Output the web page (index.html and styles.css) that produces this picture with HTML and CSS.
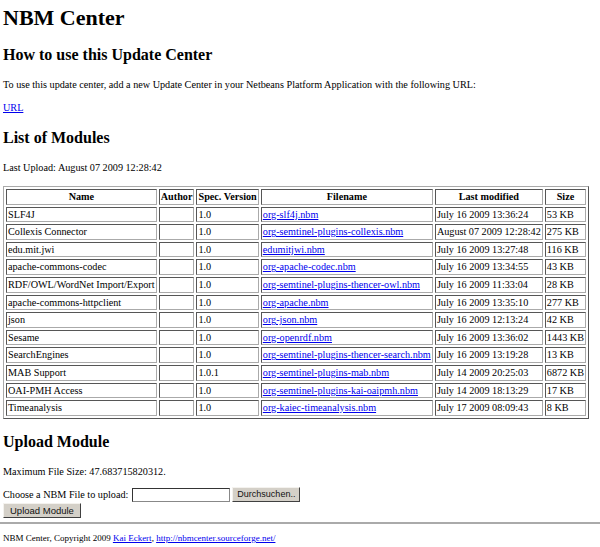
FILE: index.html
```html
<!DOCTYPE html>
<html>
<head>
<meta charset="utf-8">
<title>NBM Center</title>
<link rel="stylesheet" href="styles.css">
</head>
<body>
<h1 class="title">NBM Center</h1>
<h2 class="section">How to use this Update Center</h2>
<p class="text">To use this update center, add a new Update Center in your Netbeans Platform Application with the following URL:</p>
<p class="text"><a href="#">URL</a></p>
<h2 class="section">List of Modules</h2>
<p class="text">Last Upload: August 07 2009 12:28:42</p>
<table class="modules">
<tr><th class="c-name">Name</th><th class="c-author">Author</th><th class="c-spec">Spec. Version</th><th class="c-file">Filename</th><th class="c-mod">Last modified</th><th class="c-size">Size</th></tr>
<tr><td>SLF4J</td><td></td><td>1.0</td><td><a href="#">org-slf4j.nbm</a></td><td>July 16 2009 13:36:24</td><td>53 KB</td></tr>
<tr><td>Collexis Connector</td><td></td><td>1.0</td><td><a href="#">org-semtinel-plugins-collexis.nbm</a></td><td>August 07 2009 12:28:42</td><td>275 KB</td></tr>
<tr><td>edu.mit.jwi</td><td></td><td>1.0</td><td><a href="#">edumitjwi.nbm</a></td><td>July 16 2009 13:27:48</td><td>116 KB</td></tr>
<tr><td>apache-commons-codec</td><td></td><td>1.0</td><td><a href="#">org-apache-codec.nbm</a></td><td>July 16 2009 13:34:55</td><td>43 KB</td></tr>
<tr><td>RDF/OWL/WordNet Import/Export</td><td></td><td>1.0</td><td><a href="#">org-semtinel-plugins-thencer-owl.nbm</a></td><td>July 16 2009 11:33:04</td><td>28 KB</td></tr>
<tr><td>apache-commons-httpclient</td><td></td><td>1.0</td><td><a href="#">org-apache.nbm</a></td><td>July 16 2009 13:35:10</td><td>277 KB</td></tr>
<tr><td>json</td><td></td><td>1.0</td><td><a href="#">org-json.nbm</a></td><td>July 16 2009 12:13:24</td><td>42 KB</td></tr>
<tr><td>Sesame</td><td></td><td>1.0</td><td><a href="#">org-openrdf.nbm</a></td><td>July 16 2009 13:36:02</td><td>1443 KB</td></tr>
<tr><td>SearchEngines</td><td></td><td>1.0</td><td><a href="#">org-semtinel-plugins-thencer-search.nbm</a></td><td>July 16 2009 13:19:28</td><td>13 KB</td></tr>
<tr><td>MAB Support</td><td></td><td>1.0.1</td><td><a href="#">org-semtinel-plugins-mab.nbm</a></td><td>July 14 2009 20:25:03</td><td>6872 KB</td></tr>
<tr><td>OAI-PMH Access</td><td></td><td>1.0</td><td><a href="#">org-semtinel-plugins-kai-oaipmh.nbm</a></td><td>July 14 2009 18:13:29</td><td>17 KB</td></tr>
<tr><td>Timeanalysis</td><td></td><td>1.0</td><td><a href="#">org-kaiec-timeanalysis.nbm</a></td><td>July 17 2009 08:09:43</td><td>8 KB</td></tr>
</table>
<h2 class="section upload-title">Upload Module</h2>
<p class="text">Maximum File Size: 47.683715820312.</p>
<form class="upload">
<div class="choose">Choose a NBM File to upload: <span class="file-box"></span><span class="btn browse">Durchsuchen..</span></div>
<div class="submit-row"><span class="btn submit">Upload Module</span></div>
</form>
<hr class="rule">
<p class="footer">NBM Center, Copyright 2009 <a href="#">Kai Eckert</a>, <a href="#">http://nbmcenter.sourceforge.net/</a></p>
</body>
</html>
```

FILE: styles.css
```css
html, body {
  margin: 0;
  padding: 0;
  background: #fff;
}
body {
  padding: 0 3px;
  font-family: "Liberation Serif", "Times New Roman", serif;
  font-size: 10.2px;
  color: #000;
}
a { color: #0000ee; }
.title {
  font-size: 22px;
  font-weight: bold;
  margin: 6px 0 0 0;
  line-height: 24px;
}
.section {
  font-size: 16px;
  font-weight: bold;
  margin: 15px 0 0 0;
  line-height: 18px;
}
.title + .section { margin-top: 16px; }
.text {
  margin: 14px 0 0 0;
  line-height: 12px;
}
.section + .text { margin-top: 15px; }
.text + .text { margin-top: 11px; }
.modules {
  margin-top: 12px;
  border: 1px outset #aaa;
  border-collapse: separate;
  border-spacing: 2px;
  width: 586px;
  font-size: 10.2px;
}
.modules th, .modules td {
  border: 1px inset #aaa;
  padding: 1px;
  line-height: 11.6px;
  white-space: nowrap;
}
.modules th {
  font-weight: bold;
  text-align: center;
}
.modules td { text-align: left; }
.upload-title { margin-top: 14px; }
.upload { margin: 9px 0 0 0; }
.choose { display: flex; align-items: center; gap: 2px; height: 16px; }
.file-box {
  display: inline-block;
  width: 96px;
  height: 12px;
  border: 1px inset #888;
  margin-left: 2px;
}
.btn {
  display: inline-block;
  font-family: "Liberation Sans", Arial, sans-serif;
  font-size: 9px;
  line-height: 11px;
  color: #111;
  background: #d4d0c8;
  border: 1px solid;
  border-color: #f4f2ee #404040 #404040 #f4f2ee;
  padding: 1px 4px;
}
.submit-row { margin-top: 0; }
.submit { font-size: 9.5px; padding: 1px 6px; }
.rule {
  border: 0;
  height: 2px;
  background: #aaa;
  margin: 4px -3px 0 -3px;
}
.footer {
  font-size: 9px;
  margin: 9px 0 0 0;
}
```
